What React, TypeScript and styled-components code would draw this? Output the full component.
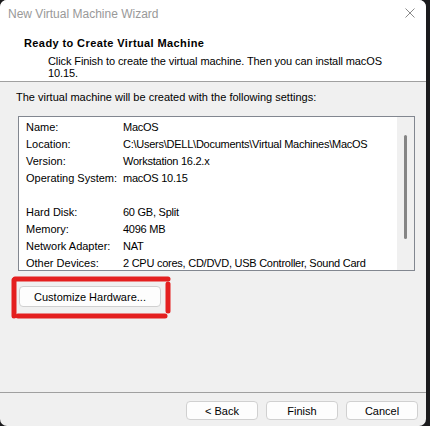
import React from "react";
import styled, { createGlobalStyle } from "styled-components";

const Global = createGlobalStyle`
  html, body { margin: 0; padding: 0; background: #1b1b1d; }
  body { font-family: "Liberation Sans", Arial, sans-serif; }
`;

const Screen = styled.div`
  width: 430px;
  height: 426px;
  display: flex;
  background: #1b1b1d;
  overflow: hidden;
`;

const Window = styled.div`
  width: 426px;
  height: 426px;
  display: flex;
  flex-direction: column;
  background: #f0f0f0;
  border-radius: 7px;
  overflow: hidden;
  font-family: "Liberation Sans", Arial, sans-serif;
  font-size: 11px;
  color: #000;
`;

const Top = styled.div`
  background: #ffffff;
  border-bottom: 1px solid #a0a0a0;
  display: flex;
  flex-direction: column;
`;

const TitleBar = styled.div`
  height: 29px;
  display: flex;
  align-items: center;
  justify-content: space-between;
  padding: 0 11px 1px 8px;
  box-sizing: border-box;
`;

const Title = styled.div`
  font-size: 12px;
  color: #999999;
  line-height: 16px;
`;

const CloseIcon = styled.svg`
  width: 10px;
  height: 10px;
  margin-top: -2px;
`;

const Header = styled.div`
  padding: 7px 0 2.5px 24px;
  display: flex;
  flex-direction: column;
`;

const Heading = styled.div`
  font-weight: bold;
  font-size: 11px;
  letter-spacing: 0.4px;
  line-height: 14px;
`;

const Subtitle = styled.div`
  margin-top: 4.5px;
  padding-left: 24px;
  width: 342px;
  line-height: 12px;
  letter-spacing: -0.1px;
`;

const Body = styled.div`
  flex: 1;
  display: flex;
  flex-direction: column;
  padding: 8px 11px 0 16px;
`;

const Intro = styled.div`
  line-height: 14px;
`;

const ListBox = styled.div`
  margin: 12px 0 0 2px;
  height: 155px;
  box-sizing: border-box;
  border: 1px solid #828790;
  background: #ffffff;
  display: flex;
`;

const Rows = styled.div`
  flex: 1;
  padding: 2px 0 0 7px;
  overflow: hidden;
`;

const Row = styled.div`
  display: flex;
  height: 17px;
  line-height: 17px;
  white-space: nowrap;
`;

const Label = styled.span`
  width: 97px;
  flex: none;
`;

const Value = styled.span`
  letter-spacing: -0.25px;
`;

const Track = styled.div`
  width: 17px;
  background: #f0f0f0;
  display: flex;
  justify-content: center;
  padding-top: 18px;
  box-sizing: border-box;
`;

const Thumb = styled.div`
  width: 3px;
  height: 104px;
  border-radius: 2px;
  background: #858585;
`;

const CustomizeWrap = styled.div`
  position: relative;
  align-self: flex-start;
  margin: 15px 0 0 3px;
`;

const Button = styled.button<{ $w: number }>`
  width: ${(p) => p.$w}px;
  height: ${(p) => (p.$w > 100 ? 21 : 19)}px;
  box-sizing: border-box;
  border: 1px solid #d0d0d0;
  border-radius: 4px;
  background: #fdfdfd;
  font-family: "Liberation Sans", Arial, sans-serif;
  font-size: 11px;
  color: #000;
  padding: 0;
  display: flex;
  align-items: center;
  justify-content: center;
`;

const Annotation = styled.svg`
  position: absolute;
  left: -10px;
  top: -12px;
  width: 165px;
  height: 46px;
  overflow: visible;
  pointer-events: none;
`;

const Footer = styled.div`
  height: 34px;
  box-sizing: border-box;
  border-top: 1px solid #a0a0a0;
  display: flex;
  justify-content: flex-end;
  align-items: flex-start;
  gap: 8px;
  padding: 8px 8px 0 0;
`;

const rows: [string, string][] = [
  ["Name:", "MacOS"],
  ["Location:", "C:\\Users\\DELL\\Documents\\Virtual Machines\\MacOS"],
  ["Version:", "Workstation 16.2.x"],
  ["Operating System:", "macOS 10.15"],
  ["", ""],
  ["Hard Disk:", "60 GB, Split"],
  ["Memory:", "4096 MB"],
  ["Network Adapter:", "NAT"],
  ["Other Devices:", "2 CPU cores, CD/DVD, USB Controller, Sound Card"],
];

export default function App() {
  return (
    <>
      <Global />
      <Screen>
        <Window>
          <Top>
            <TitleBar>
              <Title>New Virtual Machine Wizard</Title>
              <CloseIcon viewBox="0 0 10 10">
                <path d="M0.5 0.5 L9.5 9.5 M9.5 0.5 L0.5 9.5" stroke="#8a8a8a" strokeWidth="1" fill="none" />
              </CloseIcon>
            </TitleBar>
            <Header>
              <Heading>Ready to Create Virtual Machine</Heading>
              <Subtitle>
                Click Finish to create the virtual machine. Then you can install macOS 10.15.
              </Subtitle>
            </Header>
          </Top>
          <Body>
            <Intro>The virtual machine will be created with the following settings:</Intro>
            <ListBox>
              <Rows>
                {rows.map(([l, v], i) => (
                  <Row key={i}>
                    <Label>{l}</Label>
                    <Value>{v}</Value>
                  </Row>
                ))}
              </Rows>
              <Track>
                <Thumb />
              </Track>
            </ListBox>
            <CustomizeWrap>
              <Button $w={142}>Customize Hardware...</Button>
              <Annotation viewBox="0 0 165 46">
                <g stroke="#e41f1f" strokeWidth="5" strokeLinecap="round" fill="none">
                  <path d="M6 5 L159 5" />
                  <path d="M5 6 L5 42" />
                  <path d="M9 42 L156 42" />
                  <path d="M159 10 L159 37" />
                </g>
              </Annotation>
            </CustomizeWrap>
          </Body>
          <Footer>
            <Button $w={72}>&lt; Back</Button>
            <Button $w={72}>Finish</Button>
            <Button $w={72}>Cancel</Button>
          </Footer>
        </Window>
      </Screen>
    </>
  );
}
